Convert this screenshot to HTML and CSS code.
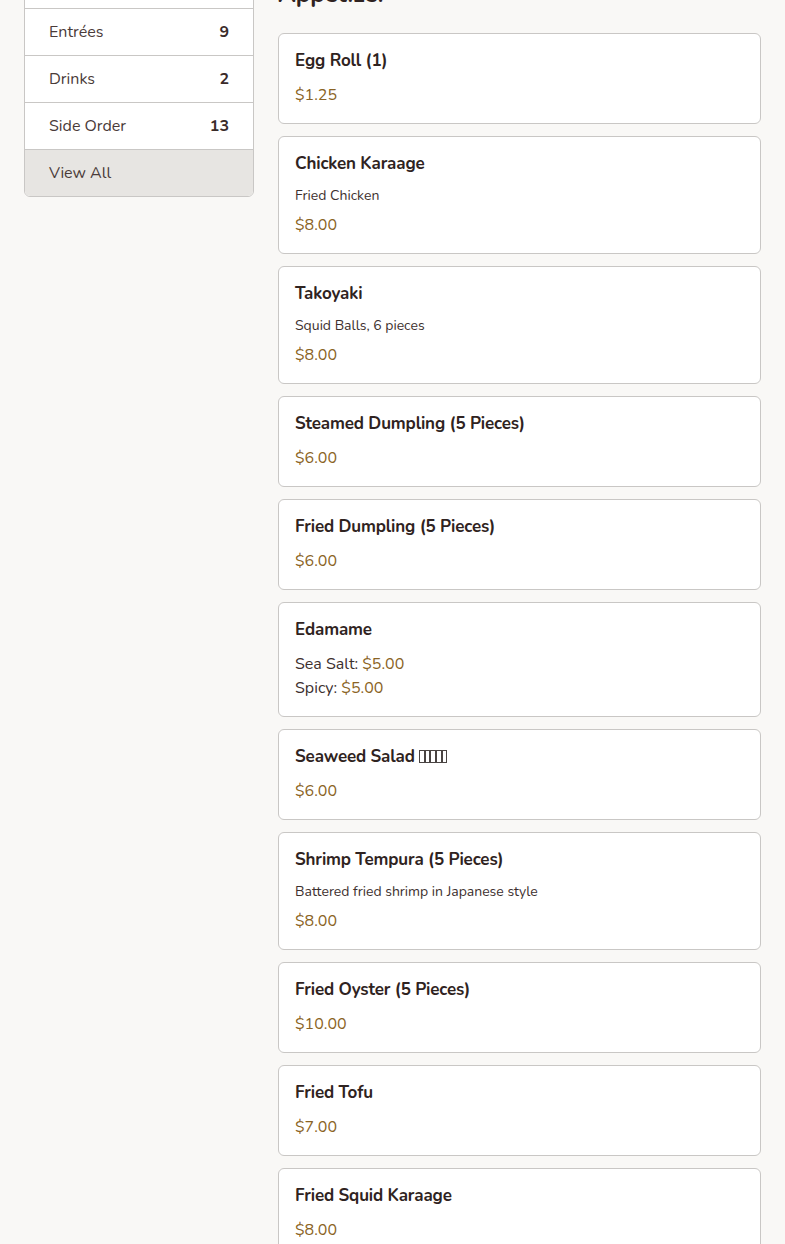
FILE: index.html
```html
<!DOCTYPE html>
<html lang="en">
<head>
<meta charset="utf-8">
<title>Menu</title>
<link rel="stylesheet" href="styles.css">
</head>
<body>
<div class="page">
  <aside class="sidebar">
    <ul class="cats">
      <li class="cat"><span class="cat-name">Appetizer</span><span class="cat-count">11</span></li>
      <li class="cat"><span class="cat-name">Entrées</span><span class="cat-count">9</span></li>
      <li class="cat"><span class="cat-name">Drinks</span><span class="cat-count">2</span></li>
      <li class="cat"><span class="cat-name">Side Order</span><span class="cat-count">13</span></li>
      <li class="cat cat-all"><span class="cat-name">View All</span></li>
    </ul>
  </aside>
  <main class="menu">
    <h2 class="section-title">Appetizer</h2>
    <div class="items">
      <div class="item">
        <h3 class="item-name">Egg Roll (1)</h3>
        <div class="price">$1.25</div>
      </div>
      <div class="item">
        <h3 class="item-name">Chicken Karaage</h3>
        <p class="desc">Fried Chicken</p>
        <div class="price">$8.00</div>
      </div>
      <div class="item">
        <h3 class="item-name">Takoyaki</h3>
        <p class="desc">Squid Balls, 6 pieces</p>
        <div class="price">$8.00</div>
      </div>
      <div class="item">
        <h3 class="item-name">Steamed Dumpling (5 Pieces)</h3>
        <div class="price">$6.00</div>
      </div>
      <div class="item">
        <h3 class="item-name">Fried Dumpling (5 Pieces)</h3>
        <div class="price">$6.00</div>
      </div>
      <div class="item">
        <h3 class="item-name">Edamame</h3>
        <div class="option">Sea Salt: <span class="opt-price">$5.00</span></div>
        <div class="option">Spicy: <span class="opt-price">$5.00</span></div>
      </div>
      <div class="item">
        <h3 class="item-name">Seaweed Salad <span class="tofu" aria-hidden="true"><i class="box"></i><i class="box"></i><i class="box"></i><i class="box"></i><i class="box"></i></span></h3>
        <div class="price">$6.00</div>
      </div>
      <div class="item">
        <h3 class="item-name">Shrimp Tempura (5 Pieces)</h3>
        <p class="desc">Battered fried shrimp in Japanese style</p>
        <div class="price">$8.00</div>
      </div>
      <div class="item">
        <h3 class="item-name">Fried Oyster (5 Pieces)</h3>
        <div class="price">$10.00</div>
      </div>
      <div class="item">
        <h3 class="item-name">Fried Tofu</h3>
        <div class="price">$7.00</div>
      </div>
      <div class="item">
        <h3 class="item-name">Fried Squid Karaage</h3>
        <div class="price">$8.00</div>
      </div>
      <div class="item">
        <h3 class="item-name">Gyoza Soup</h3>
        <div class="price">$7.00</div>
      </div>
    </div>
  </main>
</div>
</body>
</html>
```

FILE: styles.css
```css
* { box-sizing: border-box; }
html, body { margin: 0; padding: 0; }
body {
  background: #f9f8f6;
  font-family: "Nunito", "Lato", "Noto Sans", sans-serif;
  color: #2f2321;
}
.page {
  display: grid;
  grid-template-columns: 230px 1fr;
  column-gap: 24px;
  padding: 0 24px;
  margin-top: -39px;
  align-items: start;
}
.cats {
  list-style: none;
  margin: 0;
  padding: 0;
  background: #fff;
  border: 1px solid #c9c7c5;
  border-radius: 6px;
  overflow: hidden;
}
.cat {
  display: flex;
  justify-content: space-between;
  align-items: center;
  padding: 11px 24px;
  font-size: 16px;
  line-height: 24px;
  color: #4a3b39;
  border-top: 1px solid #c9c7c5;
}
.cat:first-child { border-top: none; }
.cat-count { font-weight: 700; color: #3a2b29; }
.cat-all { background: #e7e5e2; }
.menu { min-width: 0; }
.section-title {
  margin: 18px 0 24px;
  font-size: 24px;
  line-height: 30px;
  font-weight: 700;
  color: #2f2321;
}
.items {
  display: flex;
  flex-direction: column;
  gap: 12px;
}
.item {
  background: #fff;
  border: 1px solid #c9c7c5;
  border-radius: 6px;
  padding: 16px;
}
.item-name {
  margin: 0 0 12px;
  font-size: 17px;
  line-height: 21px;
  font-weight: 700;
  letter-spacing: -0.15px;
  color: #2f2321;
}
.tofu {
  display: inline-flex;
  gap: 0;
  vertical-align: -1px;
  line-height: 0;
}
.box {
  display: inline-block;
  width: 5.6px;
  height: 13px;
  border: 1px solid #4a4442;
}
.desc {
  margin: 0 0 7px;
  font-size: 14px;
  line-height: 20px;
  color: #3d302e;
}
.price {
  font-size: 16px;
  line-height: 24px;
  color: #8a6324;
}
.option {
  font-size: 16px;
  line-height: 24px;
  color: #3d302e;
}
.opt-price { color: #8a6324; }
```
